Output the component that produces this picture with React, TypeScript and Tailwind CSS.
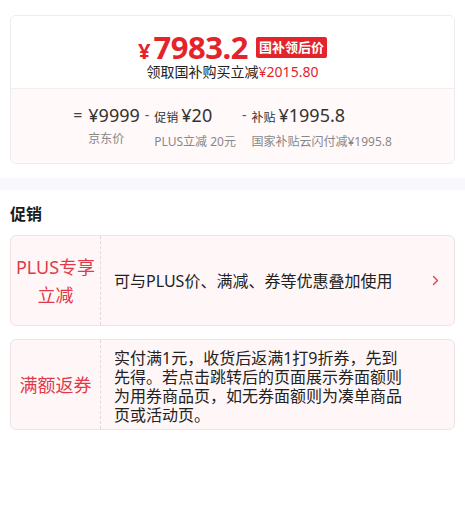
import React from "react";

const F = { fontFamily: '"Noto Sans", "Noto Sans CJK SC", sans-serif' };

export default function App() {
  return (
    <div className="w-[465px] h-[519px] bg-white overflow-hidden" style={F}>
      <div className="px-[10px] pt-[15px]">
        <div className="border border-[#ececec] rounded-[6px] overflow-hidden">
          <div className="h-[72px] bg-white flex flex-col items-center">
            <div className="flex items-center mt-[16px] h-[31px]">
              <span className="text-[#e3242b] font-bold text-[22px] leading-none mt-[4px] mr-[3px]">¥</span>
              <span className="text-[#e3242b] font-bold text-[31px] leading-none tracking-[-0.5px]">7983.2</span>
              <span className="ml-[8px] bg-[#e3242b] text-white font-bold text-[13px] leading-[21px] h-[21px] px-[3px] rounded-[2px]">国补领后价</span>
            </div>
            <div className="text-[14px] leading-[18px] text-[#222]">
              领取国补购买立减<span className="text-[#e3242b]">¥2015.80</span>
            </div>
          </div>
          <div className="h-[75px] bg-[#fff9f9] border-t border-[#f3eded] flex justify-center">
            <div className="flex items-start pt-[14px] gap-[5px]">
              <span className="text-[16px] leading-[24px] text-[#444] mr-[1px]">=</span>
              <div className="flex flex-col">
                <span className="text-[18px] leading-[24px] text-[#333]">¥9999</span>
                <span className="text-[12px] leading-[18px] text-[#888] mt-[3px]">京东价</span>
              </div>
              <span className="text-[14px] leading-[24px] text-[#555]">-</span>
              <div className="flex flex-col">
                <span className="leading-[24px] text-[#333] whitespace-nowrap">
                  <span className="text-[12px]">促销</span>
                  <span className="text-[18px] ml-[3px]">¥20</span>
                </span>
                <span className="text-[12px] leading-[18px] text-[#888] mt-[3px] whitespace-nowrap">PLUS立减 20元</span>
              </div>
              <span className="text-[14px] leading-[24px] text-[#555] ml-[1px]">-</span>
              <div className="flex flex-col">
                <span className="leading-[24px] text-[#333] whitespace-nowrap">
                  <span className="text-[12px]">补贴</span>
                  <span className="text-[18px] ml-[3px]">¥1995.8</span>
                </span>
                <span className="text-[12px] leading-[18px] text-[#888] mt-[3px] whitespace-nowrap">国家补贴云闪付减¥1995.8</span>
              </div>
            </div>
          </div>
        </div>
      </div>
      <div className="h-[12px] bg-[#f7f7fc] mt-[14px]" />
      <div className="px-[10px]">
        <div className="text-[16px] font-bold leading-[22px] text-[#1a1a1a] mt-[13px]">促销</div>
        <div className="mt-[10px] h-[91px] flex border border-[#f1e3e3] rounded-[6px] bg-[#fff7f7]">
          <div className="w-[90px] shrink-0 border-r border-dashed border-[#e9d6d6] flex items-center justify-center text-center text-[#e2394a] text-[18px] leading-[28px]">
            <div>PLUS专享<br />立减</div>
          </div>
          <div className="flex-1 flex items-center pl-[13px] pr-[15px]">
            <span className="flex-1 text-[16px] leading-[20px] text-[#222]">可与PLUS价、满减、券等优惠叠加使用</span>
            <svg width="7" height="11" viewBox="0 0 7 11" fill="none">
              <path d="M1.5 1.5 L5.5 5.5 L1.5 9.5" stroke="#e2394a" strokeWidth="1.3" strokeLinecap="round" strokeLinejoin="round" />
            </svg>
          </div>
        </div>
        <div className="mt-[13px] h-[91px] flex border border-[#f1e3e3] rounded-[6px] bg-[#fff7f7]">
          <div className="w-[90px] shrink-0 border-r border-dashed border-[#e9d6d6] flex items-center justify-center text-[#e2394a] text-[18px] leading-[28px]">
            满额返券
          </div>
          <div className="flex-1 flex items-center pl-[13px] pt-[4px]">
            <div className="w-[290px] text-[16px] leading-[19px] text-[#222]">
              实付满1元，收货后返满1打9折券，先到先得。若点击跳转后的页面展示券面额则为用券商品页，如无券面额则为凑单商品页或活动页。
            </div>
          </div>
        </div>
      </div>
    </div>
  );
}
